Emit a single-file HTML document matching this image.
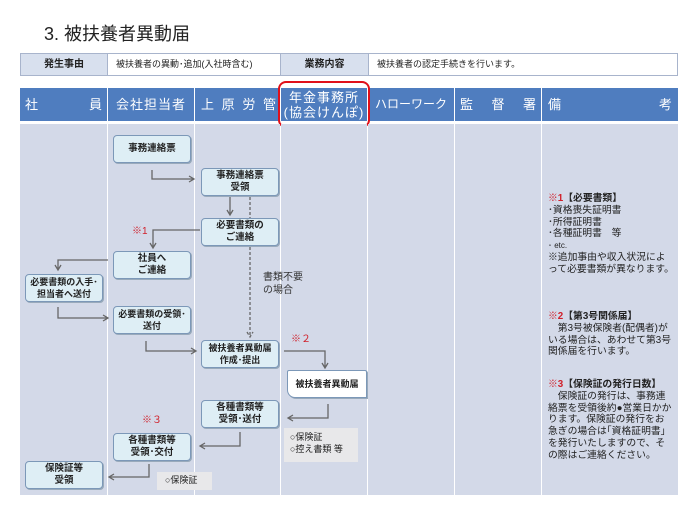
<!DOCTYPE html>
<html><head><meta charset="utf-8"><style>
*{margin:0;padding:0;box-sizing:border-box}
body{width:700px;height:525px;background:#fff;position:relative;overflow:hidden;font-family:"Liberation Sans","Noto Sans CJK JP",sans-serif;color:#222}
.a{position:absolute}
.info{top:53px;height:23px;border:1px solid #a8b4cc;font-size:10px;line-height:21px;padding-left:8px}
.lab{background:#d8e0ee;font-weight:bold;text-align:center;padding:0}
.hd{top:88px;height:33px;background:#4f7dbf;color:#fff;font-size:13px;line-height:33px;white-space:nowrap;overflow:hidden}
.col{top:124px;height:371px;background:#d3d9e8}
.bx{position:absolute;width:78px;height:28px;background:#deeef5;border:1.5px solid #7c98b8;border-radius:4px;font-size:9.5px;font-weight:bold;text-align:center;line-height:12px;display:flex;align-items:center;justify-content:center;box-shadow:1px 1px 0 #9ab}
.red{color:#d0202a;font-size:10px}
.note{font-size:9.8px;line-height:11.8px;color:#222}
</style></head><body>
<div class="a" style="left:44px;top:20px;font-size:18px;">3. 被扶養者異動届</div>
<div class="a info lab" style="left:20px;width:88px;">発生事由</div>
<div class="a info" style="left:107px;width:174px;font-size:9px;">被扶養者の異動･追加(入社時含む)</div>
<div class="a info lab" style="left:280px;width:89px;">業務内容</div>
<div class="a info" style="left:368px;width:310px;font-size:9px;">被扶養者の認定手続きを行います。</div>

<div class="a hd" style="left:20px;width:87px;padding:0 5px;display:flex;justify-content:space-between"><span>社</span><span>員</span></div>
<div class="a hd" style="left:108px;width:86px;text-align:center;letter-spacing:1px">会社担当者</div>
<div class="a hd" style="left:195px;width:85px;padding:0 4px 0 6px;display:flex;justify-content:space-between"><span>上</span><span>原</span><span>労</span><span>管</span></div>
<div class="a hd" style="left:281px;width:86px;text-align:center;line-height:15px;padding-top:2px;letter-spacing:1px">年金事務所<br>(協会けんぽ)</div>
<div class="a hd" style="left:368px;width:86px;text-align:center;font-size:12px">ハローワーク</div>
<div class="a hd" style="left:455px;width:86px;padding:0 5px;display:flex;justify-content:space-between"><span>監</span><span>督</span><span>署</span></div>
<div class="a hd" style="left:542px;width:136px;padding:0 6px;display:flex;justify-content:space-between"><span>備</span><span>考</span></div>
<div class="a" style="left:278px;top:81px;width:92px;height:47px;border:2px solid #e0101a;border-radius:8px"></div>

<div class="a col" style="left:20px;width:87px"></div>
<div class="a col" style="left:108px;width:86px"></div>
<div class="a col" style="left:195px;width:85px"></div>
<div class="a col" style="left:281px;width:86px"></div>
<div class="a col" style="left:368px;width:86px"></div>
<div class="a col" style="left:455px;width:86px"></div>
<div class="a col" style="left:542px;width:136px"></div>

<svg class="a" style="left:0;top:0" width="700" height="525" fill="none" stroke="#666" stroke-width="1.3">
<path d="M152 170V179H194M189 176l5 3-5 3"/>
<path d="M230 197V215M227 210l3 5 3-5"/>
<path d="M250 197V337M247 332l3 5 3-5" stroke-dasharray="3 2"/>
<path d="M200 230H153V248M150 243l3 5 3-5"/>
<path d="M108 260H58V270M55 265l3 5 3-5"/>
<path d="M58 307V318H108M103 315l5 3-5 3"/>
<path d="M146 341V351H196M191 348l5 3-5 3"/>
<path d="M284 351H325V368M322 363l3 5 3-5"/>
<path d="M328 404V418H288M293 415l-5 3 5 3"/>
<path d="M240 432V446H200M205 443l-5 3 5 3"/>
<path d="M149 464V477H109M114 474l-5 3 5 3"/>
</svg>

<div class="bx" style="left:113px;top:135px">事務連絡票</div>
<div class="bx" style="left:201px;top:168px">事務連絡票<br>受領</div>
<div class="bx" style="left:201px;top:218px">必要書類の<br>ご連絡</div>
<div class="bx" style="left:113px;top:251px">社員へ<br>ご連絡</div>
<div class="bx" style="left:25px;top:274px;width:78px;font-size:9px">必要書類の入手･<br>担当者へ送付</div>
<div class="bx" style="left:113px;top:306px;font-size:9px">必要書類の受領･<br>送付</div>
<div class="bx" style="left:201px;top:340px;font-size:9px">被扶養者異動届<br>作成･提出</div>
<div class="bx" style="left:287px;top:370px;width:80px;border-radius:2px 2px 0 8px;font-size:9px;background:#fff">被扶養者異動届</div>
<div class="bx" style="left:201px;top:400px">各種書類等<br>受領･送付</div>
<div class="bx" style="left:113px;top:433px">各種書類等<br>受領･交付</div>
<div class="bx" style="left:25px;top:461px">保険証等<br>受領</div>
<div class="a note" style="left:284px;top:428px;width:74px;height:34px;background:#e8e8ea;padding:3px 6px;font-size:9px;line-height:12px">○保険証<br>○控え書類 等</div>
<div class="a note" style="left:157px;top:472px;width:55px;height:18px;background:#e8e8ea;padding:3px 8px;font-size:9px">○保険証</div>

<div class="a red" style="left:132px;top:222px">※1</div>
<div class="a red" style="left:291px;top:330px">※２</div>
<div class="a red" style="left:142px;top:411px">※３</div>
<div class="a" style="left:263px;top:271px;font-size:10px;line-height:13px;color:#333">書類不要<br>の場合</div>

<div class="a note" style="left:548px;top:193px;width:126px"><b style="color:#d0202a">※1</b><b>【必要書類】</b><br>･資格喪失証明書<br>･所得証明書<br>･各種証明書　等<br><span style="font-size:8px">･ etc.</span><br>※追加事由や収入状況によって必要書類が異なります。</div>
<div class="a note" style="left:548px;top:311px;width:126px"><b style="color:#d0202a">※2</b><b>【第3号関係届】</b><br>　第3号被保険者(配偶者)がいる場合は、あわせて第3号関係届を行います。</div>
<div class="a note" style="left:548px;top:379px;width:126px"><b style="color:#d0202a">※3</b><b>【保険証の発行日数】</b><br>　保険証の発行は、事務連絡票を受領後約●営業日かかります。保険証の発行をお急ぎの場合は｢資格証明書｣を発行いたしますので、その際はご連絡ください。</div>
</body></html>
